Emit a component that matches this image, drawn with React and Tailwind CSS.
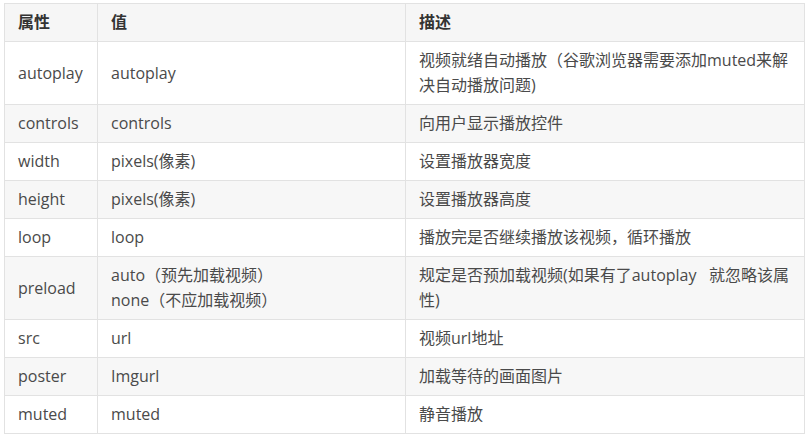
import React from "react";

const rows = [
  { name: "autoplay", value: ["autoplay"], desc: "视频就绪自动播放（谷歌浏览器需要添加muted来解决自动播放问题)" },
  { name: "controls", value: ["controls"], desc: "向用户显示播放控件" },
  { name: "width", value: ["pixels(像素)"], desc: "设置播放器宽度" },
  { name: "height", value: ["pixels(像素)"], desc: "设置播放器高度" },
  { name: "loop", value: ["loop"], desc: "播放完是否继续播放该视频，循环播放" },
  {
    name: "preload",
    value: ["auto（预先加载视频）", "none（不应加载视频）"],
    desc: "规定是否预加载视频(如果有了autoplay\u00a0\u00a0\u00a0就忽略该属性)",
  },
  { name: "src", value: ["url"], desc: "视频url地址" },
  { name: "poster", value: ["Imgurl"], desc: "加载等待的画面图片" },
  { name: "muted", value: ["muted"], desc: "静音播放" },
];

const cell = "border border-[#e2e2e2] px-[13px] py-[6px] align-middle";

export default function App() {
  return (
    <div
      className="bg-white w-[808px] h-[439px] pt-[3px] pl-[4px] text-[16px] leading-[25px] text-[#4a4a4a]"
      style={{ fontFamily: '"Open Sans", "Noto Sans CJK SC", sans-serif' }}
    >
      <table className="border-collapse w-[800px] table-fixed">
        <colgroup>
          <col className="w-[93px]" />
          <col className="w-[308px]" />
          <col className="w-[399px]" />
        </colgroup>
        <thead>
          <tr className="bg-[#f6f6f6] text-left font-bold text-[#333]">
            <th className={cell}>属性</th>
            <th className={cell}>值</th>
            <th className={cell}>描述</th>
          </tr>
        </thead>
        <tbody>
          {rows.map((r, i) => (
            <tr key={r.name} className={i % 2 === 1 ? "bg-[#f7f7f7]" : "bg-white"}>
              <td className={cell}>{r.name}</td>
              <td className={cell}>
                {r.value.map((v) => (
                  <div key={v}>{v}</div>
                ))}
              </td>
              <td className={cell}>{r.desc}</td>
            </tr>
          ))}
        </tbody>
      </table>
    </div>
  );
}
